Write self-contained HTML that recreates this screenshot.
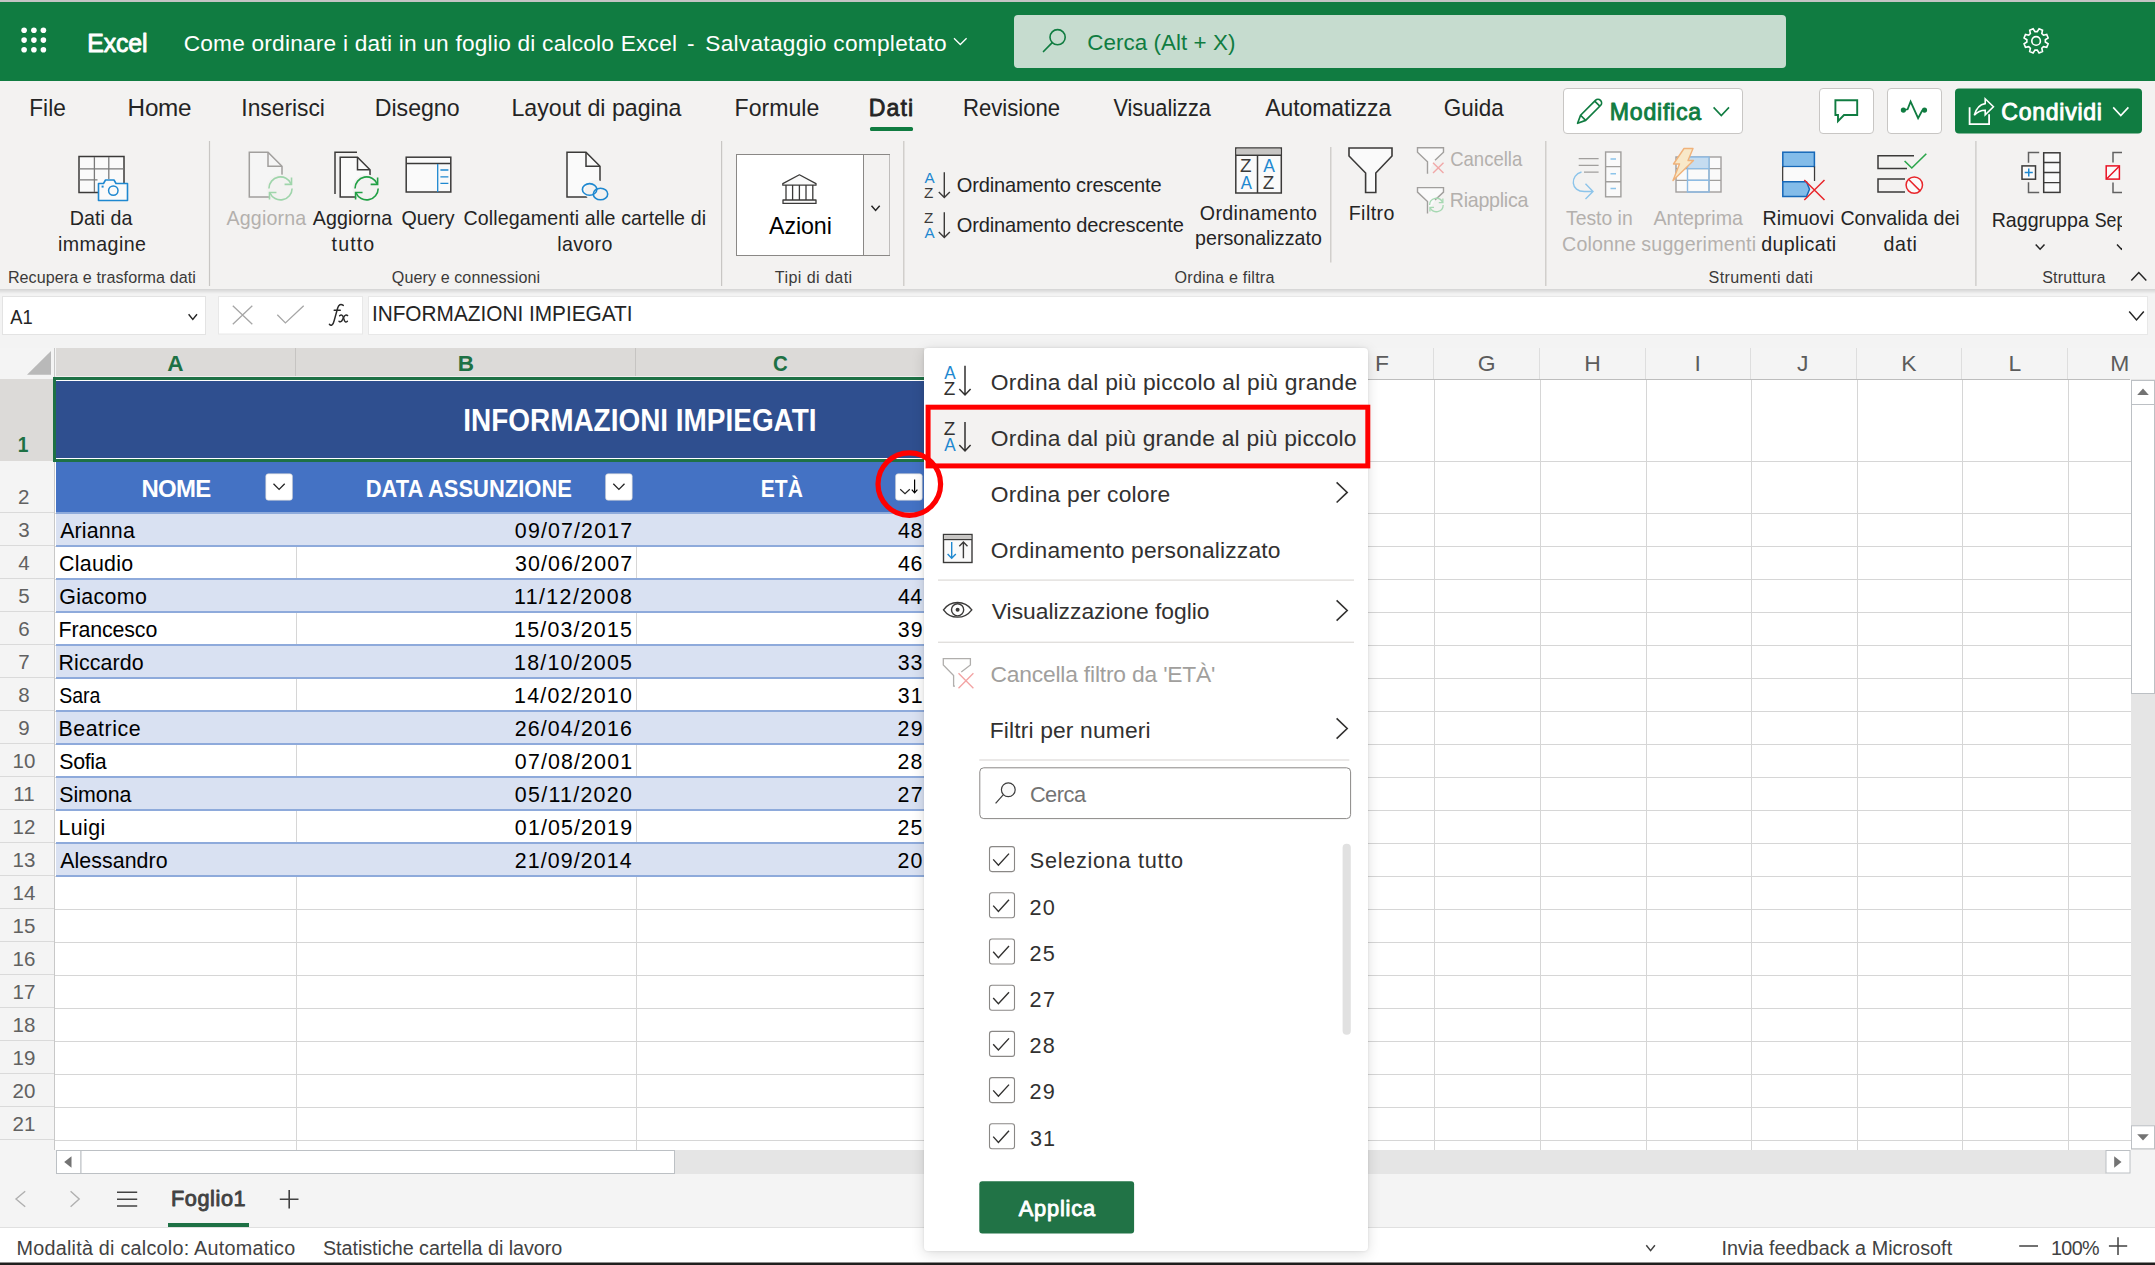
<!DOCTYPE html>
<html><head><meta charset="utf-8"><title>Excel</title>
<style>
html,body{margin:0;padding:0;width:2155px;height:1265px;overflow:hidden;background:#fff;font-family:"Liberation Sans",sans-serif;}
#pop{position:absolute;left:924px;top:348px;width:444px;height:903px;background:#fff;border-radius:4px;box-shadow:0 0 3px rgba(0,0,0,0.10),0 3px 14px rgba(0,0,0,0.13);}
</style></head><body>
<svg width="2155" height="1265" viewBox="0 0 2155 1265" style="position:absolute;left:0;top:0" font-family="Liberation Sans">
<rect x="0" y="0" width="2155" height="2" fill="#c4c4c4" />
<rect x="0" y="2" width="2155" height="79" fill="#107c41" />
<circle cx="24.1" cy="30.3" r="2.8" fill="#fff"/>
<circle cx="24.1" cy="40.1" r="2.8" fill="#fff"/>
<circle cx="24.1" cy="49.8" r="2.8" fill="#fff"/>
<circle cx="33.9" cy="30.3" r="2.8" fill="#fff"/>
<circle cx="33.9" cy="40.1" r="2.8" fill="#fff"/>
<circle cx="33.9" cy="49.8" r="2.8" fill="#fff"/>
<circle cx="43.4" cy="30.3" r="2.8" fill="#fff"/>
<circle cx="43.4" cy="40.1" r="2.8" fill="#fff"/>
<circle cx="43.4" cy="49.8" r="2.8" fill="#fff"/>
<text x="87.31" y="51.55" font-size="24.85" fill="#fff" font-family="Liberation Sans" textLength="60.10" lengthAdjust="spacing"  stroke="#fff" stroke-width="0.9" stroke-linejoin="round">Excel</text>
<text x="183.65" y="50.60" font-size="22.67" fill="#fff" font-family="Liberation Sans" textLength="493.37" lengthAdjust="spacing" >Come ordinare i dati in un foglio di calcolo Excel</text>
<text x="686.99" y="50.60" font-size="22.67" fill="#fff" font-family="Liberation Sans" textLength="8.62" lengthAdjust="spacing" >-</text>
<text x="705.27" y="50.60" font-size="22.67" fill="#fff" font-family="Liberation Sans" textLength="241.38" lengthAdjust="spacing" >Salvataggio completato</text>
<polyline points="954,38.3 960.3,44.5 966.6,38.3" stroke="#fff" stroke-width="1.3" fill="none" />
<rect x="1014" y="15" width="772" height="53" fill="#c6dccf" rx="4"/>
<circle cx="1057.6" cy="37.2" r="7.6" fill="none" stroke="#107c41" stroke-width="1.6"/>
<line x1="1052.2" y1="42.6" x2="1043.5" y2="51.5" stroke="#107c41" stroke-width="1.7" stroke-linecap="round"/>
<text x="1087.26" y="49.70" font-size="22.38" fill="#107c41" font-family="Liberation Sans" textLength="148.22" lengthAdjust="spacing" >Cerca (Alt + X)</text>
<polygon points="2045.33,42.04 2048.14,43.88 2046.72,47.30 2043.43,46.62 2041.82,48.23 2042.50,51.52 2039.08,52.94 2037.24,50.13 2034.96,50.13 2033.12,52.94 2029.70,51.52 2030.38,48.23 2028.77,46.62 2025.48,47.30 2024.06,43.88 2026.87,42.04 2026.87,39.76 2024.06,37.92 2025.48,34.50 2028.77,35.18 2030.38,33.57 2029.70,30.28 2033.12,28.86 2034.96,31.67 2037.24,31.67 2039.08,28.86 2042.50,30.28 2041.82,33.57 2043.43,35.18 2046.72,34.50 2048.14,37.92 2045.33,39.76" fill="none" stroke="#fff" stroke-width="1.6" stroke-linejoin="miter"/>
<circle cx="2036.1" cy="40.9" r="4.3" fill="none" stroke="#fff" stroke-width="1.6"/>
<rect x="0" y="81" width="2155" height="208" fill="#f3f2f1" />
<text x="29.31" y="116.30" font-size="24.27" fill="#242424" font-family="Liberation Sans" textLength="36.47" lengthAdjust="spacingAndGlyphs" >File</text>
<text x="127.61" y="116.30" font-size="24.27" fill="#242424" font-family="Liberation Sans" textLength="63.97" lengthAdjust="spacing" >Home</text>
<text x="241.36" y="116.30" font-size="24.27" fill="#242424" font-family="Liberation Sans" textLength="83.58" lengthAdjust="spacingAndGlyphs" >Inserisci</text>
<text x="374.71" y="116.30" font-size="24.27" fill="#242424" font-family="Liberation Sans" textLength="84.91" lengthAdjust="spacingAndGlyphs" >Disegno</text>
<text x="511.41" y="116.30" font-size="24.27" fill="#242424" font-family="Liberation Sans" textLength="170.09" lengthAdjust="spacingAndGlyphs" >Layout di pagina</text>
<text x="734.61" y="116.30" font-size="24.27" fill="#242424" font-family="Liberation Sans" textLength="84.67" lengthAdjust="spacingAndGlyphs" >Formule</text>
<text x="962.91" y="116.30" font-size="24.27" fill="#242424" font-family="Liberation Sans" textLength="97.17" lengthAdjust="spacingAndGlyphs" >Revisione</text>
<text x="1113.39" y="116.30" font-size="24.27" fill="#242424" font-family="Liberation Sans" textLength="97.51" lengthAdjust="spacingAndGlyphs" >Visualizza</text>
<text x="1265.15" y="116.30" font-size="24.27" fill="#242424" font-family="Liberation Sans" textLength="126.05" lengthAdjust="spacingAndGlyphs" >Automatizza</text>
<text x="1443.78" y="116.30" font-size="24.27" fill="#242424" font-family="Liberation Sans" textLength="59.92" lengthAdjust="spacingAndGlyphs" >Guida</text>
<text x="868.80" y="115.90" font-size="23.11" fill="#242424" font-family="Liberation Sans" textLength="44.35" lengthAdjust="spacing"  stroke="#242424" stroke-width="0.8" stroke-linejoin="round">Dati</text>
<rect x="870" y="127" width="43" height="4" fill="#107c41" rx="1.5"/>
<rect x="1563.5" y="88.5" width="179" height="45" fill="#fff" rx="3.5" stroke="#c8c6c4" stroke-width="1"/>
<g transform="translate(1577.6,123.3) rotate(-45)" fill="none" stroke="#107c41" stroke-width="1.7" stroke-linejoin="round"><path d="M0,0 L7.8,-3.6 H28.8 A3.6,3.6 0 0 1 28.8,3.6 H7.8 Z"/><path d="M7.8,-3.6 V3.6 M27.8,-3.6 V3.6"/></g>
<text x="1609.75" y="119.65" font-size="23.11" fill="#107c41" font-family="Liberation Sans" textLength="91.40" lengthAdjust="spacing"  stroke="#107c41" stroke-width="0.9" stroke-linejoin="round">Modifica</text>
<polyline points="1713.6,107.4 1721.3,115.6 1729,107.4" stroke="#107c41" stroke-width="1.6" fill="none" />
<rect x="1819.5" y="88.5" width="54" height="45" fill="#fff" rx="3.5" stroke="#c8c6c4" stroke-width="1"/>
<path d="M1835.4,100.2 h21.8 v14.8 h-13.2 l-6,6.2 v-6.2 h-2.6 z" fill="none" stroke="#107c41" stroke-width="1.9" stroke-linejoin="miter"/>
<rect x="1887.5" y="88.5" width="54" height="45" fill="#fff" rx="3.5" stroke="#c8c6c4" stroke-width="1"/>
<polyline points="1903.4,110.1 1907.6,109.3 1910.6,101.6 1918.1,118.2 1922.2,110.6 1924.5,110.1" fill="none" stroke="#107c41" stroke-width="1.8" stroke-linejoin="miter"/>
<circle cx="1903.4" cy="110.1" r="2.6" fill="#107c41"/><circle cx="1924.5" cy="110.1" r="2.6" fill="#107c41"/>
<rect x="1955" y="88.5" width="187" height="45" fill="#107c41" rx="4"/>
<path d="M1969.6,107.3 V124.2 H1989.1 V114.3" fill="none" stroke="#fff" stroke-width="1.8"/>
<path d="M1974.3,115.3 C1976.2,108.2 1980.2,104.3 1985.2,103.6 V98.8 L1993.4,106.8 L1985.2,114.9 V110.2 C1980.6,110.2 1977.2,112 1974.3,115.3 Z" fill="none" stroke="#fff" stroke-width="1.6" stroke-linejoin="miter"/>
<text x="2001.28" y="119.65" font-size="23.11" fill="#fff" font-family="Liberation Sans" textLength="100.63" lengthAdjust="spacing"  stroke="#fff" stroke-width="0.9" stroke-linejoin="round">Condividi</text>
<polyline points="2113.2,107.4 2120.8,115.6 2128.4,107.4" stroke="#fff" stroke-width="1.6" fill="none" />
<line x1="209.5" y1="141" x2="209.5" y2="286" stroke="#c8c6c4" stroke-width="1.2" />
<line x1="721.6" y1="141" x2="721.6" y2="286" stroke="#c8c6c4" stroke-width="1.2" />
<line x1="903.8" y1="141" x2="903.8" y2="286" stroke="#c8c6c4" stroke-width="1.2" />
<line x1="1545.8" y1="141" x2="1545.8" y2="286" stroke="#c8c6c4" stroke-width="1.2" />
<line x1="1975.9" y1="141" x2="1975.9" y2="286" stroke="#c8c6c4" stroke-width="1.2" />
<line x1="1330.8" y1="147" x2="1330.8" y2="262.5" stroke="#c8c6c4" stroke-width="1.2" />
<text x="7.88" y="283.40" font-size="16.13" fill="#3b3a39" font-family="Liberation Sans" textLength="188.01" lengthAdjust="spacing" >Recupera e trasforma dati</text>
<text x="391.84" y="283.40" font-size="16.13" fill="#3b3a39" font-family="Liberation Sans" textLength="148.25" lengthAdjust="spacing" >Query e connessioni</text>
<text x="774.74" y="283.40" font-size="16.13" fill="#3b3a39" font-family="Liberation Sans" textLength="77.45" lengthAdjust="spacing" >Tipi di dati</text>
<text x="1174.54" y="283.40" font-size="16.13" fill="#3b3a39" font-family="Liberation Sans" textLength="99.86" lengthAdjust="spacing" >Ordina e filtra</text>
<text x="1708.57" y="283.40" font-size="16.13" fill="#3b3a39" font-family="Liberation Sans" textLength="104.22" lengthAdjust="spacing" >Strumenti dati</text>
<text x="2042.17" y="283.40" font-size="16.13" fill="#3b3a39" font-family="Liberation Sans" textLength="63.23" lengthAdjust="spacing" >Struttura</text>
<polyline points="2131.3,280.6 2138.8,272.6 2146.3,280.6" stroke="#242424" stroke-width="1.5" fill="none" />
<text x="69.79" y="224.50" font-size="19.62" fill="#242424" font-family="Liberation Sans" textLength="62.51" lengthAdjust="spacing" >Dati da</text>
<text x="58.09" y="250.90" font-size="19.62" fill="#242424" font-family="Liberation Sans" textLength="87.78" lengthAdjust="spacing" >immagine</text>
<text x="226.46" y="224.60" font-size="19.62" fill="#b3b0ad" font-family="Liberation Sans" textLength="79.74" lengthAdjust="spacing" >Aggiorna</text>
<text x="312.66" y="224.60" font-size="19.62" fill="#242424" font-family="Liberation Sans" textLength="79.54" lengthAdjust="spacing" >Aggiorna</text>
<text x="331.60" y="250.90" font-size="19.62" fill="#242424" font-family="Liberation Sans" textLength="42.62" lengthAdjust="spacing" >tutto</text>
<text x="401.47" y="224.60" font-size="19.62" fill="#242424" font-family="Liberation Sans" textLength="53.07" lengthAdjust="spacing" >Query</text>
<text x="463.60" y="225.10" font-size="19.62" fill="#242424" font-family="Liberation Sans" textLength="242.42" lengthAdjust="spacing" >Collegamenti alle cartelle di</text>
<text x="557.18" y="251.10" font-size="19.62" fill="#242424" font-family="Liberation Sans" textLength="55.15" lengthAdjust="spacing" >lavoro</text>
<text x="956.85" y="191.80" font-size="20.06" fill="#242424" font-family="Liberation Sans" textLength="204.74" lengthAdjust="spacing" >Ordinamento crescente</text>
<text x="956.85" y="231.90" font-size="20.06" fill="#242424" font-family="Liberation Sans" textLength="226.94" lengthAdjust="spacing" >Ordinamento decrescente</text>
<text x="1199.77" y="219.90" font-size="19.62" fill="#242424" font-family="Liberation Sans" textLength="117.15" lengthAdjust="spacing" >Ordinamento</text>
<text x="1195.04" y="245.40" font-size="19.62" fill="#242424" font-family="Liberation Sans" textLength="126.79" lengthAdjust="spacing" >personalizzato</text>
<text x="1348.69" y="219.90" font-size="19.62" fill="#242424" font-family="Liberation Sans" textLength="45.73" lengthAdjust="spacing" >Filtro</text>
<text x="1450.20" y="166.30" font-size="19.62" fill="#b3b0ad" font-family="Liberation Sans" textLength="72.10" lengthAdjust="spacingAndGlyphs" >Cancella</text>
<text x="1449.79" y="206.80" font-size="19.62" fill="#b3b0ad" font-family="Liberation Sans" textLength="78.61" lengthAdjust="spacing" >Riapplica</text>
<text x="1565.96" y="224.60" font-size="19.62" fill="#b3b0ad" font-family="Liberation Sans" textLength="66.72" lengthAdjust="spacingAndGlyphs" >Testo in</text>
<text x="1562.10" y="250.90" font-size="19.62" fill="#b3b0ad" font-family="Liberation Sans" textLength="73.87" lengthAdjust="spacing" >Colonne</text>
<text x="1653.46" y="224.60" font-size="19.62" fill="#b3b0ad" font-family="Liberation Sans" textLength="89.44" lengthAdjust="spacing" >Anteprima</text>
<text x="1641.25" y="250.90" font-size="19.62" fill="#b3b0ad" font-family="Liberation Sans" textLength="114.87" lengthAdjust="spacing" >suggerimenti</text>
<text x="1762.59" y="224.60" font-size="19.62" fill="#242424" font-family="Liberation Sans" textLength="71.53" lengthAdjust="spacing" >Rimuovi</text>
<text x="1761.28" y="250.90" font-size="19.62" fill="#242424" font-family="Liberation Sans" textLength="74.95" lengthAdjust="spacing" >duplicati</text>
<text x="1840.40" y="224.60" font-size="19.62" fill="#242424" font-family="Liberation Sans" textLength="119.32" lengthAdjust="spacing" >Convalida dei</text>
<text x="1883.48" y="250.90" font-size="19.62" fill="#242424" font-family="Liberation Sans" textLength="33.35" lengthAdjust="spacing" >dati</text>
<text x="1991.69" y="227.00" font-size="19.62" fill="#242424" font-family="Liberation Sans" textLength="97.11" lengthAdjust="spacing" >Raggruppa</text>
<polyline points="2035.7,244.4 2040.1,249.2 2044.5,244.4" stroke="#242424" stroke-width="1.5" fill="none" />
<clipPath id="clipSep"><rect x="2080" y="140" width="42" height="150"/></clipPath>
<g clip-path="url(#clipSep)"><text x="2094.71" y="227.00" font-size="19.62" fill="#242424" font-family="Liberation Sans" textLength="57.29" lengthAdjust="spacingAndGlyphs" >Separa</text><polyline points="2117,244.4 2121.4,249.2 2125.8,244.4" fill="none" stroke="#242424" stroke-width="1.5"/><path d="M2122,152.5 h-9 v10 M2122,192.5 h-9 v-10" fill="none" stroke="#616161" stroke-width="1.5"/><rect x="2106.2" y="165.9" width="13.2" height="13.2" fill="#fafafa" stroke="#e81123" stroke-width="1.5"/><line x1="2107" y1="178.5" x2="2119" y2="166.5" stroke="#e81123" stroke-width="1.5"/></g>
<rect x="79" y="156.5" width="45" height="36" fill="#fafafa" stroke="#3b3a39" stroke-width="1.5"/>
<path d="M94.4,157 v35 M108.8,157 v22 M79.5,168.8 h44 M79.5,179.8 h18" stroke="#7a7a7a" stroke-width="1.3" fill="none"/>
<path d="M98.5,183.5 h5 l2,-3.5 h8.5 l2,3.5 h11.5 v17 h-29 z" fill="#fafafa" stroke="#1e88d0" stroke-width="1.6" stroke-linejoin="round"/>
<circle cx="113.3" cy="190.6" r="4.7" fill="none" stroke="#1e88d0" stroke-width="1.5"/><rect x="101.6" y="185.6" width="2" height="2" fill="#1e88d0"/>
<g><path d="M249.3,197 V152.3 H268 L282,166.3 V197 H249.3 z" fill="#f5f5f5" stroke="#a19f9d" stroke-width="1.5" stroke-linejoin="miter"/><path d="M268,152.3 V166.3 H282" fill="none" stroke="#a19f9d" stroke-width="1.5"/></g>
<circle cx="280.5" cy="188.4" r="14" fill="#f3f2f1"/>
<g fill="none" stroke="#9fd5ab" stroke-width="1.6"><path d="M268.9,188.4 A11.6,11.6 0 0 1 291.172,183.99200000000002"/><path d="M292.1,188.4 A11.6,11.6 0 0 1 269.828,192.808"/><path d="M291.52,177.38 V184.34 H284.56"/><path d="M269.48,199.42000000000002 V192.46 H276.44"/></g>
<path d="M335,194 V152.3 H357" fill="none" stroke="#3b3a39" stroke-width="1.5"/>
<path d="M340.2,197 V157.2 H357.5 L370,169.7 V197 H340.2 z" fill="#fafafa" stroke="#3b3a39" stroke-width="1.5" stroke-linejoin="miter"/><path d="M357.5,157.2 V169.7 H370" fill="none" stroke="#3b3a39" stroke-width="1.5"/>
<circle cx="366.6" cy="188.4" r="14" fill="#f3f2f1"/>
<g fill="none" stroke="#21a045" stroke-width="1.6"><path d="M355.0,188.4 A11.6,11.6 0 0 1 377.27200000000005,183.99200000000002"/><path d="M378.20000000000005,188.4 A11.6,11.6 0 0 1 355.928,192.808"/><path d="M377.62,177.38 V184.34 H370.66"/><path d="M355.58000000000004,199.42000000000002 V192.46 H362.54"/></g>
<rect x="406.2" y="157.2" width="44.6" height="34.8" fill="#fafafa" stroke="#3b3a39" stroke-width="1.5"/>
<path d="M406.5,163.4 h44" stroke="#3b3a39" stroke-width="1.5"/>
<path d="M437.7,164 v28 M440.4,170 h8 M440.4,176.8 h8 M440.4,183.3 h8" stroke="#1e88d0" stroke-width="1.3" fill="none"/>
<path d="M567,197 V152.3 H586 L600,166.3 V197 H567 z" fill="#fafafa" stroke="#3b3a39" stroke-width="1.5" stroke-linejoin="miter"/><path d="M586,152.3 V166.3 H600" fill="none" stroke="#3b3a39" stroke-width="1.5"/>
<circle cx="596" cy="191" r="11" fill="#f3f2f1"/>
<g fill="none" stroke="#1e88d0" stroke-width="1.6"><ellipse cx="589.6" cy="189.4" rx="7.2" ry="5.8"/><ellipse cx="600.5" cy="194" rx="7.2" ry="5.8"/></g>
<rect x="736.5" y="154.5" width="153" height="101" fill="#fff" stroke="#8a8886" stroke-width="1"/>
<rect x="864" y="155" width="25.5" height="100" fill="#f3f2f1" />
<line x1="863.5" y1="155" x2="863.5" y2="255" stroke="#8a8886" stroke-width="1" />
<polyline points="871.5,205.8 875.6,210.4 879.7,205.8" stroke="#242424" stroke-width="1.5" fill="none" />
<path d="M799.4,174.8 L816,183.6 V185.2 H782.8 V183.6 Z" fill="#fafafa" stroke="#3b3a39" stroke-width="1.3" stroke-linejoin="round"/>
<path d="M786,185 V200 M792.6,185 V200 M799.4,185 V200 M806,185 V200 M812.8,185 V200" stroke="#3b3a39" stroke-width="1.3"/>
<path d="M783,200 H816 V203.4 H783 Z" fill="#fafafa" stroke="#3b3a39" stroke-width="1.3" stroke-linejoin="round"/>
<text x="768.95" y="233.80" font-size="23.26" fill="#000" font-family="Liberation Sans" textLength="62.91" lengthAdjust="spacing" >Azioni</text>
<text x="924.47" y="182.80" font-size="15.26" fill="#1e88d0" font-family="Liberation Sans" textLength="10.16" lengthAdjust="spacing" >A</text><text x="924.02" y="197.90" font-size="15.26" fill="#3b3a39" font-family="Liberation Sans" textLength="11.06" lengthAdjust="spacing" >Z</text><path d="M944.3,172.3 V197.60000000000002 M938.8,192.10000000000002 L944.3,197.60000000000002 L949.8,192.10000000000002" fill="none" stroke="#3b3a39" stroke-width="1.4"/>
<text x="924.02" y="222.80" font-size="15.26" fill="#3b3a39" font-family="Liberation Sans" textLength="11.06" lengthAdjust="spacing" >Z</text><text x="924.47" y="237.90" font-size="15.26" fill="#1e88d0" font-family="Liberation Sans" textLength="10.16" lengthAdjust="spacing" >A</text><path d="M944.3,212.3 V237.60000000000002 M938.8,232.10000000000002 L944.3,237.60000000000002 L949.8,232.10000000000002" fill="none" stroke="#3b3a39" stroke-width="1.4"/>
<rect x="1235.8" y="148" width="45.5" height="45" fill="#fafafa" stroke="#3b3a39" stroke-width="1.5"/>
<rect x="1236.5" y="148.7" width="44" height="6" fill="#c8c6c4" />
<line x1="1236" y1="155.2" x2="1281" y2="155.2" stroke="#3b3a39" stroke-width="1.5" />
<line x1="1257.5" y1="155" x2="1257.5" y2="193" stroke="#3b3a39" stroke-width="1.5" />
<text x="1240.10" y="172.10" font-size="18.90" fill="#3b3a39" font-family="Liberation Sans" textLength="12.29" lengthAdjust="spacing" >Z</text>
<text x="1240.66" y="189.00" font-size="18.90" fill="#1e88d0" font-family="Liberation Sans" textLength="11.17" lengthAdjust="spacingAndGlyphs" >A</text>
<text x="1263.36" y="172.10" font-size="18.90" fill="#1e88d0" font-family="Liberation Sans" textLength="11.67" lengthAdjust="spacingAndGlyphs" >A</text>
<text x="1262.80" y="189.00" font-size="18.90" fill="#3b3a39" font-family="Liberation Sans" textLength="12.79" lengthAdjust="spacing" >Z</text>
<path d="M1349,148 H1392 V156 L1375.8,173 V192.5 H1365.6 V173 L1349,156 Z" fill="#fafafa" stroke="#3b3a39" stroke-width="1.6" stroke-linejoin="miter"/>
<path d="M1435.0,160.3 L1443.5,152.3 V147.8 H1417.5 V152.3 L1427.5,161.8 V173.8" fill="#fafafa" stroke="#a19f9d" stroke-width="1.4"/>
<path d="M1433,162.7 L1443.5,173 M1443.5,162.7 L1433,173" stroke="#f1a8a8" stroke-width="1.4"/>
<path d="M1435.0,200.1 L1443.5,192.1 V187.6 H1417.5 V192.1 L1427.5,201.6 V213.6" fill="#fafafa" stroke="#a19f9d" stroke-width="1.4"/>
<g fill="none" stroke="#a6d8b2" stroke-width="1.3"><path d="M1429.6000000000001,205 A6.8,6.8 0 0 1 1442.6560000000002,202.416"/><path d="M1443.2,205 A6.8,6.8 0 0 1 1430.144,207.584"/><path d="M1442.8600000000001,198.54 V202.62 H1438.7800000000002"/><path d="M1429.94,211.46 V207.38 H1434.02"/></g>
<path d="M1578.7,158.6 H1598.6 M1578.7,165.4 H1598.6 M1584,172.1 H1598.6" stroke="#a19f9d" stroke-width="1.4"/>
<rect x="1605.6" y="152" width="15.3" height="44.8" fill="#fafafa" stroke="#a19f9d" stroke-width="1.4"/>
<path d="M1605.6,166.6 H1621 M1605.6,181.8 H1621" stroke="#a19f9d" stroke-width="1.4"/>
<path d="M1610.5,159 H1616 M1610.5,173.7 H1616 M1610.5,188.5 H1616" stroke="#8cc4ea" stroke-width="1.4"/>
<path d="M1581.5,172 C1570,175 1570,192 1585,191.5 H1592.5 M1585.5,183.8 L1593,191.5 L1585.5,199" fill="none" stroke="#8cc4ea" stroke-width="1.4"/>
<rect x="1676" y="157" width="45" height="35" fill="#fafafa" stroke="#a19f9d" stroke-width="1.4"/>
<path d="M1676,168.6 H1721 M1676,180.3 H1721 M1709,157 V192" stroke="#a19f9d" stroke-width="1.2"/>
<rect x="1687.5" y="157" width="21.5" height="11.6" fill="#c5dcf0"/>
<path d="M1687.5,192 V157 H1709 V192 Z M1687.5,168.6 H1709 M1687.5,180.3 H1709" fill="none" stroke="#8dbbe3" stroke-width="1.4"/>
<path d="M1684,148.5 H1693 L1688,160.5 H1693.5 L1673,180.5 L1679.5,164 H1673.5 Z" fill="#f8e8c8" stroke="#f0b27a" stroke-width="1.4" stroke-linejoin="round"/>
<rect x="1782.8" y="152.2" width="31.6" height="14.4" fill="#83bce9" stroke="#1668b8" stroke-width="1.5"/>
<path d="M1782.8,166.6 V181.8 M1814.4,166.6 V181" stroke="#3b3a39" stroke-width="1.5"/>
<rect x="1783.5" y="167.3" width="30.2" height="14.2" fill="#fafafa" />
<path d="M1782.8,181.8 H1806.5 L1809.5,189.3 L1806.5,196.5 H1782.8 Z" fill="#83bce9" stroke="#1668b8" stroke-width="1.5"/>
<path d="M1804.3,180 L1824.5,200 M1824.5,180 L1804.3,200" stroke="#e8262b" stroke-width="1.5"/>
<path d="M1914,155.8 H1878 V168.6 H1907" fill="none" stroke="#3b3a39" stroke-width="1.5"/>
<path d="M1905,179 H1878 V192 H1905" fill="none" stroke="#3b3a39" stroke-width="1.5"/>
<path d="M1904.6,161 L1911.8,168 L1926.3,153.8" fill="none" stroke="#2aa54a" stroke-width="1.6"/>
<circle cx="1914.3" cy="185.1" r="8.2" fill="#fafafa" stroke="#e8262b" stroke-width="1.5"/><line x1="1908.5" y1="179.3" x2="1920.1" y2="190.9" stroke="#e8262b" stroke-width="1.5"/>
<path d="M2039.2,152.6 H2028.5 V162.7 M2039.2,192.4 H2028.5 V182.3" fill="none" stroke="#616161" stroke-width="1.5"/>
<rect x="2022" y="165.9" width="13.5" height="13.3" fill="#fafafa" stroke="#3b3a39" stroke-width="1.5"/>
<path d="M2028.75,168.5 V176.6 M2024.7,172.55 H2032.8" stroke="#1e88d0" stroke-width="1.5"/>
<rect x="2043.7" y="152.8" width="16.3" height="39.6" fill="#fafafa" stroke="#3b3a39" stroke-width="1.5"/>
<path d="M2043.7,162.5 H2060 M2043.7,172.5 H2060 M2043.7,182.6 H2060" stroke="#3b3a39" stroke-width="1.3"/>
<linearGradient id="rsh" x1="0" y1="0" x2="0" y2="1"><stop offset="0" stop-color="#000" stop-opacity="0.13"/><stop offset="1" stop-color="#000" stop-opacity="0"/></linearGradient>
<rect x="0" y="289" width="2155" height="59" fill="#f3f3f3" />
<rect x="0" y="289" width="2155" height="5" fill="url(#rsh)" />
<rect x="2.5" y="296.5" width="203" height="38" fill="#fff" stroke="#e3e3e3" stroke-width="1"/>
<text x="10.16" y="324.00" font-size="20.35" fill="#242424" font-family="Liberation Sans" textLength="22.43" lengthAdjust="spacingAndGlyphs" >A1</text>
<polyline points="188.6,314.3 192.8,319.5 197,314.3" stroke="#242424" stroke-width="1.4" fill="none" />
<rect x="218.5" y="296.5" width="144" height="37.5" fill="#fff" stroke="#e8e8e8" stroke-width="1"/>
<path d="M232.8,305.8 L252.3,324.3 M252.3,305.8 L232.8,324.3" stroke="#a6a6a6" stroke-width="1.3"/>
<polyline points="277.3,314.8 285.4,322.9 303.7,305.8" fill="none" stroke="#a6a6a6" stroke-width="1.3"/>
<g fill="none" stroke="#2a2a2a" stroke-width="1.45" stroke-linecap="round"><path d="M329.4,324.2 C331,326.2 333.2,325 334.2,320.5 L337.6,308.2 C338.6,304.6 340.8,303.6 343.3,305.4"/><path d="M334.2,310.3 H340.3"/><path d="M339.6,315.8 C341.2,314.4 342.6,315 343.2,317 L344.4,320.6 C345,322.3 346.2,322.4 347.4,321.2"/><path d="M347.6,315.6 C346.2,314.4 344.9,315.2 343.9,316.9 L342.4,319.8 C341.4,321.8 340.1,322.4 339,321.2"/></g>
<rect x="368.5" y="296.5" width="1779" height="38" fill="#fff" stroke="#e8e8e8" stroke-width="1"/>
<text x="371.89" y="320.80" font-size="21.80" fill="#242424" font-family="Liberation Sans" textLength="260.72" lengthAdjust="spacingAndGlyphs" >INFORMAZIONI IMPIEGATI</text>
<polyline points="2129.2,311.6 2136.5,319.9 2143.8,311.6" stroke="#242424" stroke-width="1.5" fill="none" />
<rect x="0" y="348" width="2155" height="32" fill="#f4f4f4" />
<rect x="56" y="348" width="868" height="28" fill="#dcdad8" />
<rect x="54" y="376" width="870" height="1" fill="#f0eded" />
<polygon points="51,351 51,374.7 27,374.7" fill="#b9b9b9"/>
<rect x="295" y="348" width="1" height="28" fill="#c6c4c2" />
<rect x="635" y="348" width="1" height="28" fill="#c6c4c2" />
<rect x="1433" y="348" width="1" height="31" fill="#dedede" />
<rect x="1539" y="348" width="1" height="31" fill="#dedede" />
<rect x="1645" y="348" width="1" height="31" fill="#dedede" />
<rect x="1750" y="348" width="1" height="31" fill="#dedede" />
<rect x="1856" y="348" width="1" height="31" fill="#dedede" />
<rect x="1961" y="348" width="1" height="31" fill="#dedede" />
<rect x="2067" y="348" width="1" height="31" fill="#dedede" />
<rect x="924" y="379" width="1206" height="1" fill="#bdbdbd" />
<text x="167.24" y="371.00" font-size="22.53" fill="#1e7145" font-weight="700" font-family="Liberation Sans" textLength="15.96" lengthAdjust="spacing" >A</text>
<text x="457.69" y="371.00" font-size="22.53" fill="#1e7145" font-weight="700" font-family="Liberation Sans" textLength="15.73" lengthAdjust="spacing" >B</text>
<text x="773.08" y="371.00" font-size="22.53" fill="#1e7145" font-weight="700" font-family="Liberation Sans" textLength="14.74" lengthAdjust="spacingAndGlyphs" >C</text>
<text x="1381.9" y="370.8" font-size="22.9" fill="#5c5c5c" text-anchor="middle">F</text>
<text x="1486.6" y="370.8" font-size="22.9" fill="#5c5c5c" text-anchor="middle">G</text>
<text x="1592.4" y="370.8" font-size="22.9" fill="#5c5c5c" text-anchor="middle">H</text>
<text x="1697.6" y="370.8" font-size="22.9" fill="#5c5c5c" text-anchor="middle">I</text>
<text x="1802.8" y="370.8" font-size="22.9" fill="#5c5c5c" text-anchor="middle">J</text>
<text x="1909" y="370.8" font-size="22.9" fill="#5c5c5c" text-anchor="middle">K</text>
<text x="2014.8" y="370.8" font-size="22.9" fill="#5c5c5c" text-anchor="middle">L</text>
<text x="2119.9" y="370.8" font-size="22.9" fill="#5c5c5c" text-anchor="middle">M</text>
<rect x="0" y="380" width="54" height="770" fill="#f4f4f4" />
<rect x="0" y="379" width="53" height="82" fill="#dcdad8" />
<rect x="0" y="512" width="54" height="1" fill="#dadada" />
<rect x="0" y="545" width="54" height="1" fill="#dadada" />
<rect x="0" y="578" width="54" height="1" fill="#dadada" />
<rect x="0" y="611" width="54" height="1" fill="#dadada" />
<rect x="0" y="644" width="54" height="1" fill="#dadada" />
<rect x="0" y="677" width="54" height="1" fill="#dadada" />
<rect x="0" y="710" width="54" height="1" fill="#dadada" />
<rect x="0" y="743" width="54" height="1" fill="#dadada" />
<rect x="0" y="776" width="54" height="1" fill="#dadada" />
<rect x="0" y="809" width="54" height="1" fill="#dadada" />
<rect x="0" y="842" width="54" height="1" fill="#dadada" />
<rect x="0" y="875" width="54" height="1" fill="#dadada" />
<rect x="0" y="908" width="54" height="1" fill="#dadada" />
<rect x="0" y="941" width="54" height="1" fill="#dadada" />
<rect x="0" y="974" width="54" height="1" fill="#dadada" />
<rect x="0" y="1007" width="54" height="1" fill="#dadada" />
<rect x="0" y="1040" width="54" height="1" fill="#dadada" />
<rect x="0" y="1073" width="54" height="1" fill="#dadada" />
<rect x="0" y="1106" width="54" height="1" fill="#dadada" />
<rect x="0" y="1139" width="54" height="1" fill="#dadada" />
<rect x="54" y="348" width="1" height="802" fill="#c8c8c8" />
<text x="17.73" y="451.70" font-size="21.80" fill="#1e7145" font-weight="700" font-family="Liberation Sans" textLength="10.68" lengthAdjust="spacingAndGlyphs" >1</text>
<text x="23.6" y="504.3" font-size="20.5" fill="#616161" text-anchor="middle">2</text>
<text x="24" y="537.4" font-size="20.5" fill="#616161" text-anchor="middle">3</text>
<text x="24" y="570.4" font-size="20.5" fill="#616161" text-anchor="middle">4</text>
<text x="24" y="603.4" font-size="20.5" fill="#616161" text-anchor="middle">5</text>
<text x="24" y="636.4" font-size="20.5" fill="#616161" text-anchor="middle">6</text>
<text x="24" y="669.4" font-size="20.5" fill="#616161" text-anchor="middle">7</text>
<text x="24" y="702.4" font-size="20.5" fill="#616161" text-anchor="middle">8</text>
<text x="24" y="735.4" font-size="20.5" fill="#616161" text-anchor="middle">9</text>
<text x="24" y="768.4" font-size="20.5" fill="#616161" text-anchor="middle">10</text>
<text x="24" y="801.4" font-size="20.5" fill="#616161" text-anchor="middle">11</text>
<text x="24" y="834.4" font-size="20.5" fill="#616161" text-anchor="middle">12</text>
<text x="24" y="867.4" font-size="20.5" fill="#616161" text-anchor="middle">13</text>
<text x="24" y="900.4" font-size="20.5" fill="#616161" text-anchor="middle">14</text>
<text x="24" y="933.4" font-size="20.5" fill="#616161" text-anchor="middle">15</text>
<text x="24" y="966.4" font-size="20.5" fill="#616161" text-anchor="middle">16</text>
<text x="24" y="999.4" font-size="20.5" fill="#616161" text-anchor="middle">17</text>
<text x="24" y="1032.4" font-size="20.5" fill="#616161" text-anchor="middle">18</text>
<text x="24" y="1065.4" font-size="20.5" fill="#616161" text-anchor="middle">19</text>
<text x="24" y="1098.4" font-size="20.5" fill="#616161" text-anchor="middle">20</text>
<text x="24" y="1131.4" font-size="20.5" fill="#616161" text-anchor="middle">21</text>
<rect x="55" y="380" width="2076" height="770" fill="#fff" />
<rect x="55" y="513" width="2076" height="1" fill="#d6d6d6" />
<rect x="55" y="546" width="2076" height="1" fill="#d6d6d6" />
<rect x="55" y="579" width="2076" height="1" fill="#d6d6d6" />
<rect x="55" y="612" width="2076" height="1" fill="#d6d6d6" />
<rect x="55" y="645" width="2076" height="1" fill="#d6d6d6" />
<rect x="55" y="678" width="2076" height="1" fill="#d6d6d6" />
<rect x="55" y="711" width="2076" height="1" fill="#d6d6d6" />
<rect x="55" y="744" width="2076" height="1" fill="#d6d6d6" />
<rect x="55" y="777" width="2076" height="1" fill="#d6d6d6" />
<rect x="55" y="810" width="2076" height="1" fill="#d6d6d6" />
<rect x="55" y="843" width="2076" height="1" fill="#d6d6d6" />
<rect x="55" y="876" width="2076" height="1" fill="#d6d6d6" />
<rect x="55" y="909" width="2076" height="1" fill="#d6d6d6" />
<rect x="55" y="942" width="2076" height="1" fill="#d6d6d6" />
<rect x="55" y="975" width="2076" height="1" fill="#d6d6d6" />
<rect x="55" y="1008" width="2076" height="1" fill="#d6d6d6" />
<rect x="55" y="1041" width="2076" height="1" fill="#d6d6d6" />
<rect x="55" y="1074" width="2076" height="1" fill="#d6d6d6" />
<rect x="55" y="1107" width="2076" height="1" fill="#d6d6d6" />
<rect x="55" y="1140" width="2076" height="1" fill="#d6d6d6" />
<rect x="924" y="461" width="1207" height="1" fill="#d6d6d6" />
<rect x="296" y="380" width="1" height="770" fill="#d6d6d6" />
<rect x="636" y="380" width="1" height="770" fill="#d6d6d6" />
<rect x="1434" y="380" width="1" height="770" fill="#d6d6d6" />
<rect x="1540" y="380" width="1" height="770" fill="#d6d6d6" />
<rect x="1646" y="380" width="1" height="770" fill="#d6d6d6" />
<rect x="1751" y="380" width="1" height="770" fill="#d6d6d6" />
<rect x="1857" y="380" width="1" height="770" fill="#d6d6d6" />
<rect x="1962" y="380" width="1" height="770" fill="#d6d6d6" />
<rect x="2068" y="380" width="1" height="770" fill="#d6d6d6" />
<rect x="56" y="381" width="868" height="77" fill="#2f4f8f" />
<rect x="56" y="462" width="868" height="50" fill="#4472c4" />
<rect x="56" y="514" width="868" height="31" fill="#d9e1f2" />
<rect x="56" y="580" width="868" height="31" fill="#d9e1f2" />
<rect x="56" y="646" width="868" height="31" fill="#d9e1f2" />
<rect x="56" y="712" width="868" height="31" fill="#d9e1f2" />
<rect x="56" y="778" width="868" height="31" fill="#d9e1f2" />
<rect x="56" y="844" width="868" height="31" fill="#d9e1f2" />
<rect x="56" y="512" width="868" height="2" fill="#8eaadb" />
<rect x="56" y="545" width="868" height="2" fill="#8eaadb" />
<rect x="56" y="578" width="868" height="2" fill="#8eaadb" />
<rect x="56" y="611" width="868" height="2" fill="#8eaadb" />
<rect x="56" y="644" width="868" height="2" fill="#8eaadb" />
<rect x="56" y="677" width="868" height="2" fill="#8eaadb" />
<rect x="56" y="710" width="868" height="2" fill="#8eaadb" />
<rect x="56" y="743" width="868" height="2" fill="#8eaadb" />
<rect x="56" y="776" width="868" height="2" fill="#8eaadb" />
<rect x="56" y="809" width="868" height="2" fill="#8eaadb" />
<rect x="56" y="842" width="868" height="2" fill="#8eaadb" />
<rect x="56" y="875" width="868" height="2" fill="#8eaadb" />
<rect x="53" y="377" width="871" height="3" fill="#1e7145" />
<rect x="53" y="459" width="871" height="3" fill="#1e7145" />
<rect x="53" y="377" width="3" height="85" fill="#1e7145" />
<rect x="56" y="380" width="868" height="1" fill="#fff" />
<rect x="56" y="458" width="868" height="1" fill="#fff" />
<text x="463.26" y="431.00" font-size="30.52" fill="#fff" font-weight="700" font-family="Liberation Sans" textLength="353.28" lengthAdjust="spacingAndGlyphs" >INFORMAZIONI IMPIEGATI</text>
<text x="141.40" y="496.50" font-size="23.98" fill="#fff" font-weight="700" font-family="Liberation Sans" textLength="69.94" lengthAdjust="spacing" >NOME</text>
<text x="365.70" y="496.50" font-size="23.98" fill="#fff" font-weight="700" font-family="Liberation Sans" textLength="206.24" lengthAdjust="spacingAndGlyphs" >DATA ASSUNZIONE</text>
<text x="760.80" y="496.50" font-size="23.98" fill="#fff" font-weight="700" font-family="Liberation Sans" textLength="42.04" lengthAdjust="spacingAndGlyphs" >ETÀ</text>
<rect x="265.8" y="473.8" width="26.6" height="26.4" rx="2.5" fill="#fff" stroke="#d0d0d0" stroke-width="0.6"/><polyline points="273.5,483.8 279.1,489.4 284.7,483.8" stroke="#242424" stroke-width="1.3" fill="none" />
<rect x="605.6" y="473.8" width="26.6" height="26.4" rx="2.5" fill="#fff" stroke="#d0d0d0" stroke-width="0.6"/><polyline points="613.3,483.8 618.9,489.4 624.5,483.8" stroke="#242424" stroke-width="1.3" fill="none" />
<rect x="895.6" y="473.8" width="26.6" height="26.4" rx="2.5" fill="#fff" stroke="#d0d0d0" stroke-width="0.6"/><polyline points="900.2,489.3 905,493.6 909.8,489.3" stroke="#242424" stroke-width="1.2" fill="none" /><path d="M914.6,479.6 V492.6 M911.8,489.6 L914.6,492.8 L917.4,489.6" fill="none" stroke="#000" stroke-width="1.2"/>
<text x="60.16" y="537.60" font-size="21.37" fill="#000" font-family="Liberation Sans" textLength="74.64" lengthAdjust="spacing" >Arianna</text>
<text x="514.87" y="537.60" font-size="21.37" fill="#000" font-family="Liberation Sans" textLength="117.21" lengthAdjust="spacing" >09/07/2017</text>
<text x="898.01" y="537.60" font-size="21.37" fill="#000" font-family="Liberation Sans" textLength="24.42" lengthAdjust="spacing" >48</text>
<text x="59.11" y="570.60" font-size="21.37" fill="#000" font-family="Liberation Sans" textLength="73.98" lengthAdjust="spacing" >Claudio</text>
<text x="514.89" y="570.60" font-size="21.37" fill="#000" font-family="Liberation Sans" textLength="117.19" lengthAdjust="spacing" >30/06/2007</text>
<text x="898.01" y="570.60" font-size="21.37" fill="#000" font-family="Liberation Sans" textLength="24.43" lengthAdjust="spacing" >46</text>
<text x="59.13" y="603.60" font-size="21.37" fill="#000" font-family="Liberation Sans" textLength="87.77" lengthAdjust="spacing" >Giacomo</text>
<text x="514.07" y="603.60" font-size="21.37" fill="#000" font-family="Liberation Sans" textLength="117.86" lengthAdjust="spacing" >11/12/2008</text>
<text x="898.01" y="603.60" font-size="21.37" fill="#000" font-family="Liberation Sans" textLength="24.12" lengthAdjust="spacing" >44</text>
<text x="58.45" y="636.60" font-size="21.37" fill="#000" font-family="Liberation Sans" textLength="98.85" lengthAdjust="spacing" >Francesco</text>
<text x="514.07" y="636.60" font-size="21.37" fill="#000" font-family="Liberation Sans" textLength="117.82" lengthAdjust="spacing" >15/03/2015</text>
<text x="897.69" y="636.60" font-size="21.37" fill="#000" font-family="Liberation Sans" textLength="24.83" lengthAdjust="spacing" >39</text>
<text x="58.45" y="669.60" font-size="21.37" fill="#000" font-family="Liberation Sans" textLength="85.25" lengthAdjust="spacing" >Riccardo</text>
<text x="514.07" y="669.60" font-size="21.37" fill="#000" font-family="Liberation Sans" textLength="117.82" lengthAdjust="spacing" >18/10/2005</text>
<text x="897.69" y="669.60" font-size="21.37" fill="#000" font-family="Liberation Sans" textLength="24.75" lengthAdjust="spacing" >33</text>
<text x="59.23" y="702.60" font-size="21.37" fill="#000" font-family="Liberation Sans" textLength="41.27" lengthAdjust="spacingAndGlyphs" >Sara</text>
<text x="514.07" y="702.60" font-size="21.37" fill="#000" font-family="Liberation Sans" textLength="117.76" lengthAdjust="spacing" >14/02/2010</text>
<text x="897.69" y="702.60" font-size="21.37" fill="#000" font-family="Liberation Sans" textLength="24.86" lengthAdjust="spacing" >31</text>
<text x="58.45" y="735.60" font-size="21.37" fill="#000" font-family="Liberation Sans" textLength="82.10" lengthAdjust="spacing" >Beatrice</text>
<text x="514.63" y="735.60" font-size="21.37" fill="#000" font-family="Liberation Sans" textLength="117.31" lengthAdjust="spacing" >26/04/2016</text>
<text x="897.43" y="735.60" font-size="21.37" fill="#000" font-family="Liberation Sans" textLength="25.09" lengthAdjust="spacing" >29</text>
<text x="59.23" y="768.60" font-size="21.37" fill="#000" font-family="Liberation Sans" textLength="47.37" lengthAdjust="spacing" >Sofia</text>
<text x="514.87" y="768.60" font-size="21.37" fill="#000" font-family="Liberation Sans" textLength="117.18" lengthAdjust="spacing" >07/08/2001</text>
<text x="897.43" y="768.60" font-size="21.37" fill="#000" font-family="Liberation Sans" textLength="25.00" lengthAdjust="spacing" >28</text>
<text x="59.23" y="801.60" font-size="21.37" fill="#000" font-family="Liberation Sans" textLength="72.17" lengthAdjust="spacing" >Simona</text>
<text x="514.87" y="801.60" font-size="21.37" fill="#000" font-family="Liberation Sans" textLength="116.97" lengthAdjust="spacing" >05/11/2020</text>
<text x="897.43" y="801.60" font-size="21.37" fill="#000" font-family="Liberation Sans" textLength="25.15" lengthAdjust="spacing" >27</text>
<text x="58.45" y="834.60" font-size="21.37" fill="#000" font-family="Liberation Sans" textLength="46.79" lengthAdjust="spacing" >Luigi</text>
<text x="514.87" y="834.60" font-size="21.37" fill="#000" font-family="Liberation Sans" textLength="117.15" lengthAdjust="spacing" >01/05/2019</text>
<text x="897.43" y="834.60" font-size="21.37" fill="#000" font-family="Liberation Sans" textLength="24.97" lengthAdjust="spacing" >25</text>
<text x="60.16" y="867.60" font-size="21.37" fill="#000" font-family="Liberation Sans" textLength="107.44" lengthAdjust="spacing" >Alessandro</text>
<text x="514.63" y="867.60" font-size="21.37" fill="#000" font-family="Liberation Sans" textLength="117.00" lengthAdjust="spacing" >21/09/2014</text>
<text x="897.43" y="867.60" font-size="21.37" fill="#000" font-family="Liberation Sans" textLength="24.91" lengthAdjust="spacing" >20</text>
<rect x="0" y="1150" width="2155" height="24" fill="#f4f4f4" />
<rect x="56.5" y="1150.5" width="24.5" height="23" fill="#fff" stroke="#bcc0c4" stroke-width="1"/>
<polygon points="64.2,1162 71.5,1156.2 71.5,1167.7" fill="#737373"/>
<rect x="81" y="1150.5" width="593.5" height="23" fill="#fff" stroke="#bcc0c4" stroke-width="1"/>
<rect x="675" y="1150" width="1431" height="24" fill="#e5e5e5" />
<rect x="2106" y="1150.5" width="24" height="22.5" fill="#fff" stroke="#bcc0c4" stroke-width="1"/>
<polygon points="2121.5,1162 2114.2,1156.2 2114.2,1167.7" fill="#737373"/>
<rect x="2131" y="379" width="24" height="771" fill="#e5e5e5" />
<rect x="2131.5" y="380.5" width="23" height="24" fill="#fff" stroke="#bcc0c4" stroke-width="1"/>
<polygon points="2137.2,395 2143,388.6 2148.8,395" fill="#737373"/>
<rect x="2131.5" y="404.5" width="23" height="289" fill="#fff" stroke="#bcc0c4" stroke-width="1"/>
<rect x="2131.5" y="1125.8" width="23" height="23" fill="#fff" stroke="#bcc0c4" stroke-width="1"/>
<polygon points="2137.2,1134.3 2143,1140.5 2148.8,1134.3" fill="#737373"/>
<rect x="0" y="1174" width="2155" height="54" fill="#f4f4f4" />
<line x1="0" y1="1227.5" x2="2155" y2="1227.5" stroke="#e0e0e0" stroke-width="1" />
<polyline points="25.2,1191.2 16,1199 25.2,1206.8" stroke="#b0b0b0" stroke-width="1.4" fill="none" />
<polyline points="70.6,1191.2 79.2,1199 70.6,1206.8" stroke="#b0b0b0" stroke-width="1.4" fill="none" />
<path d="M117,1192.3 H137.2 M117,1199.2 H137.2 M117,1206 H137.2" stroke="#424242" stroke-width="1.6"/>
<text x="170.97" y="1206.35" font-size="21.66" fill="#424242" font-family="Liberation Sans" textLength="74.63" lengthAdjust="spacing"  stroke="#424242" stroke-width="0.9" stroke-linejoin="round">Foglio1</text>
<rect x="168" y="1223" width="81" height="4" fill="#1e7145" />
<path d="M289.2,1190 V1208.4 M279.8,1199.2 H298.5" stroke="#424242" stroke-width="1.6"/>
<rect x="0" y="1228" width="2155" height="35" fill="#fff" />
<text x="16.48" y="1254.70" font-size="19.77" fill="#424242" font-family="Liberation Sans" textLength="278.65" lengthAdjust="spacing" >Modalità di calcolo: Automatico</text>
<text x="322.90" y="1254.70" font-size="19.77" fill="#424242" font-family="Liberation Sans" textLength="239.43" lengthAdjust="spacing" >Statistiche cartella di lavoro</text>
<polyline points="1646.3,1245.3 1650.6,1250.6 1654.9,1245.3" stroke="#424242" stroke-width="1.5" fill="none" />
<text x="1721.48" y="1254.90" font-size="19.77" fill="#424242" font-family="Liberation Sans" textLength="230.67" lengthAdjust="spacing" >Invia feedback a Microsoft</text>
<line x1="2019.2" y1="1246" x2="2038" y2="1246" stroke="#424242" stroke-width="1.5" />
<text x="2050.89" y="1254.90" font-size="19.77" fill="#424242" font-family="Liberation Sans" textLength="48.71" lengthAdjust="spacing" >100%</text>
<path d="M2118,1237.2 V1254.9 M2108.9,1246 H2127.2" stroke="#424242" stroke-width="1.5"/>
<rect x="0" y="1262.5" width="2155" height="3" fill="#201f1e" />
</svg>
<div id="pop"></div>
<svg width="2155" height="1265" viewBox="0 0 2155 1265" style="position:absolute;left:0;top:0" font-family="Liberation Sans">
<text x="944.26" y="378.70" font-size="18.90" fill="#1e88d0" font-family="Liberation Sans" textLength="11.47" lengthAdjust="spacingAndGlyphs" >A</text>
<text x="943.70" y="395.30" font-size="18.90" fill="#323130" font-family="Liberation Sans" textLength="12.59" lengthAdjust="spacing" >Z</text>
<path d="M965,365.8 V395 M959.3,389 L965,395 L970.6,389" fill="none" stroke="#323130" stroke-width="1.5"/>
<text x="990.82" y="390.00" font-size="22.82" fill="#323130" font-family="Liberation Sans" textLength="366.29" lengthAdjust="spacing" >Ordina dal più piccolo al più grande</text>
<rect x="931" y="409.7" width="434.6" height="53.2" fill="#f3f2f1" />
<text x="943.70" y="434.60" font-size="18.90" fill="#323130" font-family="Liberation Sans" textLength="12.59" lengthAdjust="spacing" >Z</text>
<text x="944.26" y="451.20" font-size="18.90" fill="#1e88d0" font-family="Liberation Sans" textLength="11.47" lengthAdjust="spacingAndGlyphs" >A</text>
<path d="M965,422 V451 M959.3,445 L965,451 L970.6,445" fill="none" stroke="#323130" stroke-width="1.5"/>
<text x="990.82" y="445.70" font-size="22.82" fill="#323130" font-family="Liberation Sans" textLength="365.74" lengthAdjust="spacing" >Ordina dal più grande al più piccolo</text>
<text x="990.82" y="501.60" font-size="22.82" fill="#323130" font-family="Liberation Sans" textLength="179.39" lengthAdjust="spacing" >Ordina per colore</text>
<polyline points="1336.6,482.3 1347.2,492.4 1336.6,502.5" stroke="#323130" stroke-width="1.6" fill="none" />
<rect x="943.5" y="534.5" width="28.5" height="28" fill="#fafafa" stroke="#3b3a39" stroke-width="1.4"/>
<rect x="944.2" y="535.2" width="27" height="4.2" fill="#c8c6c4" />
<line x1="943.5" y1="539.6" x2="972" y2="539.6" stroke="#3b3a39" stroke-width="1.2" />
<path d="M951.7,542 V558 M947.6,554 L951.7,558.2 L955.8,554" fill="none" stroke="#1e88d0" stroke-width="1.4"/>
<path d="M963.4,558.2 V542 M959.3,546.2 L963.4,542 L967.5,546.2" fill="none" stroke="#3b3a39" stroke-width="1.4"/>
<text x="990.82" y="557.50" font-size="22.82" fill="#323130" font-family="Liberation Sans" textLength="289.64" lengthAdjust="spacing" >Ordinamento personalizzato</text>
<rect x="938" y="579.4" width="416" height="1.4" fill="#e1dfdd" />
<path d="M943.5,609.8 C950.5,600 964.5,600 971.8,609.8 C964.5,619.6 950.5,619.6 943.5,609.8 Z" fill="none" stroke="#3b3a39" stroke-width="1.4"/>
<circle cx="957.6" cy="609.8" r="6.1" fill="none" stroke="#3b3a39" stroke-width="1.4"/><circle cx="957.6" cy="609.8" r="2" fill="#3b3a39"/>
<text x="991.80" y="619.40" font-size="22.82" fill="#323130" font-family="Liberation Sans" textLength="217.76" lengthAdjust="spacing" >Visualizzazione foglio</text>
<polyline points="1336.6,600.4 1347.2,610.5 1336.6,620.6" stroke="#323130" stroke-width="1.6" fill="none" />
<rect x="938" y="641.6" width="416" height="1.4" fill="#e1dfdd" />
<path d="M961.3,672 L970.4,665 V658.6 H943.3 V665 L953.6,675.5 V686.2 H955" fill="none" stroke="#b0aeac" stroke-width="1.3"/>
<path d="M958.5,673.3 L973.4,688.2 M973.4,673.3 L958.5,688.2" stroke="#f3a3a3" stroke-width="1.3"/>
<text x="990.44" y="681.80" font-size="22.82" fill="#a19f9d" font-family="Liberation Sans" textLength="225.01" lengthAdjust="spacing" >Cancella filtro da 'ETÀ'</text>
<text x="989.73" y="737.90" font-size="22.82" fill="#323130" font-family="Liberation Sans" textLength="160.81" lengthAdjust="spacing" >Filtri per numeri</text>
<polyline points="1336.6,718.3 1347.2,728.5 1336.6,738.7" stroke="#323130" stroke-width="1.6" fill="none" />
<rect x="979.3" y="759.3" width="370" height="1.4" fill="#e1dfdd" />
<rect x="979.8" y="767.8" width="370.8" height="50.8" fill="#fff" rx="4" stroke="#8a8886" stroke-width="1"/>
<circle cx="1008.3" cy="789.8" r="6.9" fill="#fafafa" stroke="#3b3b3b" stroke-width="1.2"/><line x1="1003.4" y1="794.7" x2="995.6" y2="803.3" stroke="#3b3b3b" stroke-width="1.2"/>
<text x="1029.89" y="801.90" font-size="21.80" fill="#737373" font-family="Liberation Sans" textLength="56.11" lengthAdjust="spacing" >Cerca</text>
<rect x="989.5" y="846.6" width="25" height="25" rx="2.5" fill="#fff" stroke="#8a8886" stroke-width="1.1"/>
<polyline points="993.2,859.4 998.4,865.2 1009,853.6" fill="none" stroke="#323130" stroke-width="1.4"/>
<text x="1029.72" y="868.40" font-size="21.66" fill="#323130" font-family="Liberation Sans" textLength="153.39" lengthAdjust="spacing" >Seleziona tutto</text>
<rect x="989.5" y="892.8000000000001" width="25" height="25" rx="2.5" fill="#fff" stroke="#8a8886" stroke-width="1.1"/>
<polyline points="993.2,905.6 998.4,911.4000000000001 1009,899.8000000000001" fill="none" stroke="#323130" stroke-width="1.4"/>
<text x="1029.61" y="914.60" font-size="21.66" fill="#323130" font-family="Liberation Sans" textLength="25.14" lengthAdjust="spacing" >20</text>
<rect x="989.5" y="939.0" width="25" height="25" rx="2.5" fill="#fff" stroke="#8a8886" stroke-width="1.1"/>
<polyline points="993.2,951.8 998.4,957.6 1009,946.0" fill="none" stroke="#323130" stroke-width="1.4"/>
<text x="1029.61" y="960.80" font-size="21.66" fill="#323130" font-family="Liberation Sans" textLength="25.20" lengthAdjust="spacing" >25</text>
<rect x="989.5" y="985.2" width="25" height="25" rx="2.5" fill="#fff" stroke="#8a8886" stroke-width="1.1"/>
<polyline points="993.2,998.0 998.4,1003.8000000000001 1009,992.2" fill="none" stroke="#323130" stroke-width="1.4"/>
<text x="1029.61" y="1007.00" font-size="21.66" fill="#323130" font-family="Liberation Sans" textLength="25.38" lengthAdjust="spacing" >27</text>
<rect x="989.5" y="1031.4" width="25" height="25" rx="2.5" fill="#fff" stroke="#8a8886" stroke-width="1.1"/>
<polyline points="993.2,1044.2 998.4,1050.0 1009,1038.4" fill="none" stroke="#323130" stroke-width="1.4"/>
<text x="1029.61" y="1053.20" font-size="21.66" fill="#323130" font-family="Liberation Sans" textLength="25.23" lengthAdjust="spacing" >28</text>
<rect x="989.5" y="1077.6" width="25" height="25" rx="2.5" fill="#fff" stroke="#8a8886" stroke-width="1.1"/>
<polyline points="993.2,1090.3999999999999 998.4,1096.1999999999998 1009,1084.6" fill="none" stroke="#323130" stroke-width="1.4"/>
<text x="1029.61" y="1099.40" font-size="21.66" fill="#323130" font-family="Liberation Sans" textLength="25.31" lengthAdjust="spacing" >29</text>
<rect x="989.5" y="1123.8000000000002" width="25" height="25" rx="2.5" fill="#fff" stroke="#8a8886" stroke-width="1.1"/>
<polyline points="993.2,1136.6000000000001 998.4,1142.4 1009,1130.8000000000002" fill="none" stroke="#323130" stroke-width="1.4"/>
<text x="1029.88" y="1145.60" font-size="21.66" fill="#323130" font-family="Liberation Sans" textLength="25.08" lengthAdjust="spacing" >31</text>
<rect x="1342.6" y="843.8" width="8.2" height="191" fill="#e1e1e1" rx="4"/>
<rect x="979.3" y="1181.2" width="154.8" height="52.2" fill="#217346" rx="3"/>
<text x="1018.71" y="1216.45" font-size="21.80" fill="#fff" font-family="Liberation Sans" textLength="76.34" lengthAdjust="spacing"  stroke="#fff" stroke-width="0.9" stroke-linejoin="round">Applica</text>
<rect x="928.1" y="407.2" width="439.7" height="58.7" fill="none" stroke="#ff0000" stroke-width="5"/>
<circle cx="909.3" cy="484.1" r="31.3" fill="none" stroke="#ff0000" stroke-width="5.2"/>
</svg>
</body></html>
